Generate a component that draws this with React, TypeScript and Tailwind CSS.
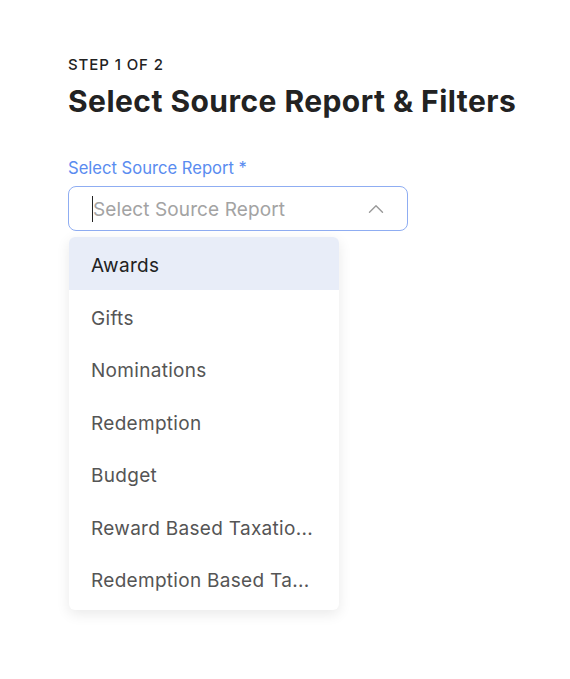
import { ChevronUp } from "lucide-react";

// label shown in the list, full name kept for the hover title
const options = [
  { label: "Awards", full: "Awards" },
  { label: "Gifts", full: "Gifts" },
  { label: "Nominations", full: "Nominations" },
  { label: "Redemption", full: "Redemption" },
  { label: "Budget", full: "Budget" },
  { label: "Reward Based Taxatio...", full: "Reward Based Taxation Report" },
  { label: "Redemption Based Ta...", full: "Redemption Based Taxation Report" },
];

export default function App() {
  return (
    <div className="min-h-screen w-full bg-white font-['Inter','Noto_Sans',sans-serif] pl-[68px] pt-[55px]">
      <p className="text-[15px] leading-5 font-medium uppercase tracking-[0.9px] text-[#222]">Step 1 of 2</p>
      <h1 className="mt-[8px] text-[30px] leading-9 font-bold tracking-[0.45px] text-[#222]">
        Select Source Report &amp; Filters
      </h1>

      <div className="mt-[39px] w-[340px]">
        <label className="block text-[16.6px] leading-5 text-[#5a8cf0]">Select Source Report *</label>
        <div className="mt-2 flex h-[45px] items-center rounded-lg border border-[#8fadf2] pl-[23px] pr-[18px]">
          <span className="h-[26px] w-px bg-[#222]" />
          <span className="mt-[4px] flex-1 text-[19px] tracking-[0.1px] text-[#a3a3a3]">Select Source Report</span>
          <ChevronUp className="text-[#999]" size={26} strokeWidth={1.3} />
        </div>

        <ul className="mt-[6px] ml-px w-[270px] overflow-hidden rounded-md bg-white pb-[5px] shadow-[0_4px_14px_rgba(0,0,0,0.09)]">
          {options.map((o, i) => (
            <li
              key={o.full}
              title={o.full}
              className={`flex h-[52.5px] items-center px-[22px] pt-[6px] text-[19px] tracking-[0.3px] ${
                i === 0 ? "bg-[#e8edf8] text-[#222]" : "text-[#555]"
              }`}
            >
              <span className="truncate">{o.label}</span>
            </li>
          ))}
        </ul>
      </div>
    </div>
  );
}
